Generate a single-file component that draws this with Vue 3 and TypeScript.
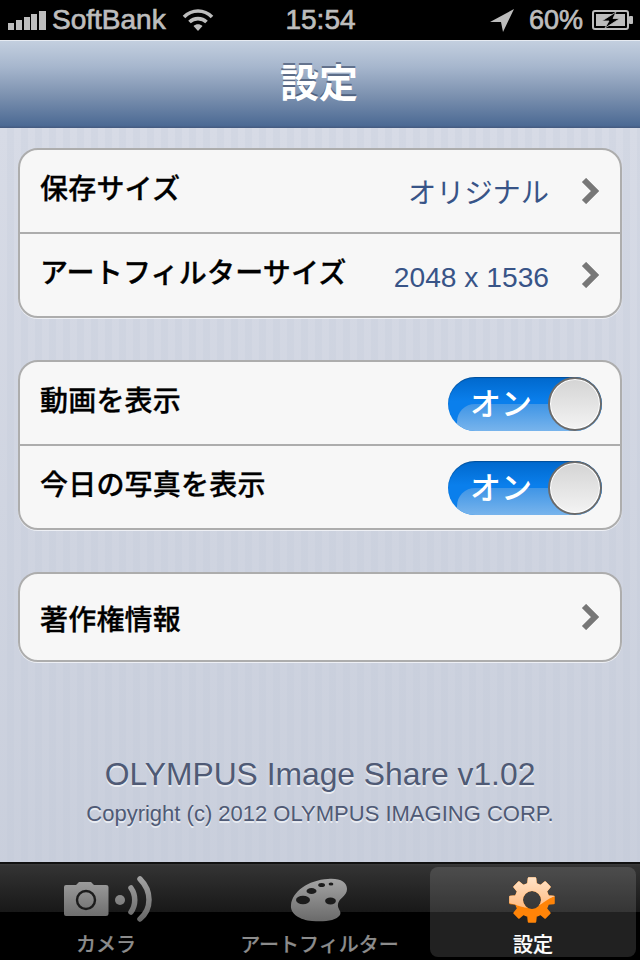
<script setup lang="ts">
interface Row { label: string; value?: string; chevron?: boolean; toggle?: boolean }
const groups: { id: string; rows: Row[] }[] = [
  { id: 'a', rows: [
    { label: '保存サイズ', value: 'オリジナル', chevron: true },
    { label: 'アートフィルターサイズ', value: '2048 x 1536', chevron: true },
  ] },
  { id: 'b', rows: [
    { label: '動画を表示', toggle: true },
    { label: '今日の写真を表示', toggle: true },
  ] },
  { id: 'c', rows: [{ label: '著作権情報', chevron: true }] },
]
const gearPath = (() => {
  const cx = 24, cy = 24, teeth = 8
  const pts: string[] = []
  for (let i = 0; i < teeth; i++) {
    const a = (i / teeth) * Math.PI * 2 - Math.PI / 2
    const w = Math.PI / teeth
    const p = (r: number, t: number) => `${(cx + r * Math.cos(t)).toFixed(2)} ${(cy + r * Math.sin(t)).toFixed(2)}`
    pts.push(`${i === 0 ? 'M' : 'L'}${p(16.5, a - w * 0.6)}`, `L${p(22, a - w * 0.38)}`, `L${p(22, a + w * 0.38)}`, `L${p(16.5, a + w * 0.6)}`)
  }
  return pts.join(' ') + ' Z M24 14 A10 10 0 1 0 24 34 A10 10 0 1 0 24 14 Z'
})()
</script>

<template>
  <div class="screen">
    <header class="status">
      <div class="status-left">
        <svg class="signal" width="38" height="20" viewBox="0 0 38 20" fill="#bdbdbd">
          <rect x="0" y="12" width="6" height="7" />
          <rect x="8" y="9" width="6" height="10" />
          <rect x="16" y="6" width="6" height="13" />
          <rect x="23" y="3" width="6" height="16" />
          <rect x="31" y="0" width="7" height="19" />
        </svg>
        <span class="carrier">SoftBank</span>
        <svg class="wifi" width="32" height="22" viewBox="0 0 32 22" fill="none" stroke="#bdbdbd" stroke-width="3.6">
          <path d="M2 8 C10 0 22 0 30 8" />
          <path d="M7.5 13 C12 8.5 20 8.5 24.5 13" />
          <path d="M16 22 L11.5 17 C14 14.8 18 14.8 20.5 17 Z" fill="#bdbdbd" stroke="none" />
        </svg>
      </div>
      <span class="time">15:54</span>
      <div class="status-right">
        <svg class="arrow" width="24" height="23" viewBox="0 0 24 23" fill="#bdbdbd"><path d="M24 0 L0 13 L11 13 L13 23 Z" /></svg>
        <span class="pct">60%</span>
        <svg width="41" height="20" viewBox="0 0 41 20">
          <rect x="1" y="1" width="35" height="18" rx="2" fill="none" stroke="#bdbdbd" stroke-width="2" />
          <rect x="4" y="4" width="29" height="12" fill="#bdbdbd" />
          <rect x="37" y="6" width="4" height="8" rx="1" fill="#bdbdbd" />
          <path d="M24 2 L10 11 L17 11 L13 18 L28 8.5 L21 8.5 Z" fill="#000" stroke="#bdbdbd" stroke-width="0.8" />
        </svg>
      </div>
    </header>

    <nav class="navbar"><h1>設定</h1></nav>

    <main class="content">
      <section v-for="g in groups" :key="g.id" class="group" :class="`group-${g.id}`">
        <div v-for="r in g.rows" :key="r.label" class="row">
          <span class="label">{{ r.label }}</span>
          <span v-if="r.value" class="value">{{ r.value }}</span>
          <svg v-if="r.chevron" class="chev" width="18" height="26" viewBox="0 0 18 26" fill="none" stroke="#777" stroke-width="6">
            <path d="M3 2 L14 13 L3 24" />
          </svg>
          <div v-if="r.toggle" class="switch">
            <span class="on">オン</span>
            <span class="knob"></span>
          </div>
        </div>
      </section>
      <footer class="about">
        <p class="app">OLYMPUS Image Share v1.02</p>
        <p class="copy">Copyright (c) 2012 OLYMPUS IMAGING CORP.</p>
      </footer>
    </main>

    <nav class="tabbar">
      <div class="tab tab-cam">
        <svg width="90" height="46" viewBox="0 0 90 46">
          <defs>
            <linearGradient id="tg" gradientUnits="userSpaceOnUse" x1="0" y1="0" x2="0" y2="46">
              <stop offset="0" stop-color="#a4a4a4" /><stop offset="1" stop-color="#666" />
            </linearGradient>
          </defs>
          <path fill="url(#tg)" d="M4 9 H14 L17 6 H29 L32 9 H44 Q46.500 9 46.500 11 V38 Q46.500 40 44 40 H4 Q2 40 2 38 V11 Q2 9 4 9 Z" />
          <circle cx="24" cy="24" r="9" fill="none" stroke="#1c1c1c" stroke-width="2.4" />
          <circle cx="58" cy="24" r="5" fill="url(#tg)" />
          <path d="M69 12 C74 19 74 29 69 36" fill="none" stroke="url(#tg)" stroke-width="5.5" stroke-linecap="round" />
          <path d="M78 3 C90 15 90 33 78 43" fill="none" stroke="url(#tg)" stroke-width="5.5" stroke-linecap="round" />
        </svg>
        <span>カメラ</span>
      </div>
      <div class="tab tab-art">
        <svg width="58" height="44" viewBox="0 0 58 44">
          <defs>
            <linearGradient id="pg" x1="0" y1="0" x2="0" y2="1">
              <stop offset="0" stop-color="#a4a4a4" /><stop offset="1" stop-color="#6a6a6a" />
            </linearGradient>
          </defs>
          <path fill="url(#pg)" d="M1 27 C2 14 18 2 38 1 C50 0 57 4 57 11 C57 18 49 20 48 26 C47 31 52 33 50 37 C46 43 34 44 22 43 C10 42 0 36 1 27 Z" />
          <ellipse cx="13" cy="22" rx="7" ry="4.200" fill="#1c1c1c" />
          <ellipse cx="21.500" cy="13" rx="5" ry="3" fill="#1c1c1c" />
          <ellipse cx="31.600" cy="7" rx="3.400" ry="2.100" fill="#1c1c1c" />
          <ellipse cx="41" cy="6" rx="2.400" ry="1.600" fill="#1c1c1c" />
          <ellipse cx="40.500" cy="23" rx="5.400" ry="3.400" fill="#1c1c1c" />
        </svg>
        <span>アートフィルター</span>
      </div>
      <div class="tab tab-set">
        <svg width="48" height="48" viewBox="0 0 48 48">
          <defs>
            <linearGradient id="gl" x1="0" y1="0" x2="0" y2="1">
              <stop offset="0" stop-color="#ffe2c6" /><stop offset="1" stop-color="#ffa860" />
            </linearGradient>
            <clipPath id="glclip"><path d="M0 0 H48 V20 C38 22 32 32 22 32 C14 32 8 28 0 27 Z" /></clipPath>
          </defs>
          <path fill="#ff8408" stroke="#ff8408" stroke-width="2" stroke-linejoin="round" fill-rule="evenodd" :d="gearPath" />
          <g clip-path="url(#glclip)">
            <path fill="url(#gl)" stroke="url(#gl)" stroke-width="2" stroke-linejoin="round" fill-rule="evenodd" :d="gearPath" />
          </g>
        </svg>
        <span>設定</span>
      </div>
    </nav>
  </div>
</template>

<style>
html, body { margin: 0; background: #000; }
</style>

<style scoped>
* { box-sizing: border-box; }
.screen {
  width: 640px; height: 960px; display: flex; flex-direction: column; overflow: hidden;
  font-family: "Liberation Sans", "Noto Sans CJK JP", sans-serif;
}
.status {
  height: 40px; flex: none; background: #000; color: #bdbdbd; display: grid;
  grid-template-columns: 1fr auto 1fr; align-items: center; padding: 0 7px 0 8px;
  font-size: 28px; line-height: 38px;
}
.status-left { display: flex; align-items: center; }
.signal { margin-right: 6px; margin-top: 2px; }
.carrier { -webkit-text-stroke: 0.7px #bdbdbd; }
.wifi { margin-left: 16px; }
.time { -webkit-text-stroke: 0.7px #bdbdbd; }
.status-right { display: flex; align-items: center; justify-content: flex-end; }
.arrow { margin-right: 1px; }
.pct { margin: 0 9px 0 14px; font-size: 27px; -webkit-text-stroke: 0.7px #bdbdbd; }
.navbar {
  height: 88px; flex: none; display: flex; align-items: center; justify-content: center;
  background: linear-gradient(#c3cfdf 0%, #a6b6cd 30%, #7d92b0 62%, #4c6a94 97%, #43597e 100%);
  border-top: 1px solid #e6ebf2; padding: 0 2px 10px 0;
}
.navbar h1 {
  margin: 0; color: #fff; font-size: 39px; line-height: 44px; font-weight: 700;
  text-shadow: 0 -2px 0 rgba(40, 55, 85, 0.55); font-family: "Noto Sans CJK JP", sans-serif;
}
.content {
  flex: 1; display: flex; flex-direction: column; gap: 42px; padding: 20px 18px 0;
  background-color: #d2d7e2;
  background-image:
    linear-gradient(rgba(190, 197, 212, 0) 0%, rgba(190, 197, 212, 0.55) 100%),
    repeating-linear-gradient(90deg, #d7dbe6 0 7px, #d2d7e3 7px 14px);
}
.group {
  background: #f7f7f7; border: 2px solid #adadad; border-radius: 20px; overflow: hidden;
  box-shadow: 0 1px 0 #eef0f5;
}
.row {
  height: 82px; display: flex; align-items: center; padding: 0 20px 0 20px;
}
.row + .row { height: 84px; border-top: 2px solid #adadad; }
.group-c .row { height: 86px; }
.label {
  flex: 1; font-size: 28px; font-weight: 500; color: #000; line-height: 40px; margin-top: -8px;
  letter-spacing: 0.2px; -webkit-text-stroke: 0.3px #000;
  font-family: "Noto Sans CJK JP", sans-serif;
}
.group-c .label { margin-top: 0; padding-top: 2px; }
.value { font-size: 28.200px; color: #385487; margin-right: 33px; line-height: 40px; margin-top: 4px; }
.chev { flex: none; margin-left: -1px; margin-right: 1px; }
.switch {
  position: relative; width: 154px; height: 54px; border-radius: 27px; flex: none; margin: 2px -2px 0 0;
  background: linear-gradient(#0068cc 0, #0a7fec 45%, #0a7fec 100%); overflow: hidden;
  box-shadow: inset 0 1px 1px rgba(0, 0, 0, 0.25);
}
.switch::before {
  content: ""; position: absolute; left: 9px; right: 0; top: 27px; bottom: 0;
  border-radius: 18px 0 0 0;
  background: linear-gradient(#3f95e6, #78b4ec);
}
.on {
  position: absolute; left: 22px; top: 5px; color: #fff; font-size: 31px; line-height: 40px; font-weight: 500;
  font-family: "Noto Sans CJK JP", sans-serif;
}
.knob {
  position: absolute; right: 0; top: 0; width: 54px; height: 54px; border-radius: 50%;
  border: 2px solid #6b6b6b; background: linear-gradient(#d4d4d4, #f3f3f3);
  box-shadow: inset 0 0 0 1px #fff;
}
.about { margin-top: 50px; text-align: center; color: #4f5a75; }
.about p { margin: 0; }
.app { font-size: 31.800px; line-height: 40px; text-shadow: 0 1.500px 0 #e9ecf2; }
.copy { font-size: 22px; line-height: 28px; margin-top: 6px !important; text-shadow: 0 1.500px 0 #e9ecf2; }
.tabbar {
  height: 98px; flex: none; display: grid; grid-template-columns: 212px 212px 212px; padding: 3px 4px 4px 0;
  border-top: 2px solid #111;
  background: linear-gradient(#3c3c3c 0, #333 2px, #181818 48px, #000 48px, #000 100%);
}
.tab {
  display: flex; flex-direction: column; align-items: center; color: #8c8c8c;
  font-size: 20px; font-weight: 500; line-height: 26px; font-family: "Noto Sans CJK JP", sans-serif;
  -webkit-text-stroke: 0.2px currentColor;
}
.tab svg { flex: none; }
.tab-cam { padding-top: 9px; }
.tab-cam svg { margin-left: 2px; }
.tab-cam span { margin-top: 9px; }
.tab-art { padding-top: 11px; margin-left: 2px; }
.tab-art span { margin-top: 9px; margin-left: 1px; }
.tab-set {
  background: rgba(255, 255, 255, 0.13); border-radius: 8px; color: #fff; margin-left: 6px; padding-top: 9px;
}
.tab-set svg { margin-left: -2px; }
.tab-set span { margin-top: 7px; }
</style>
